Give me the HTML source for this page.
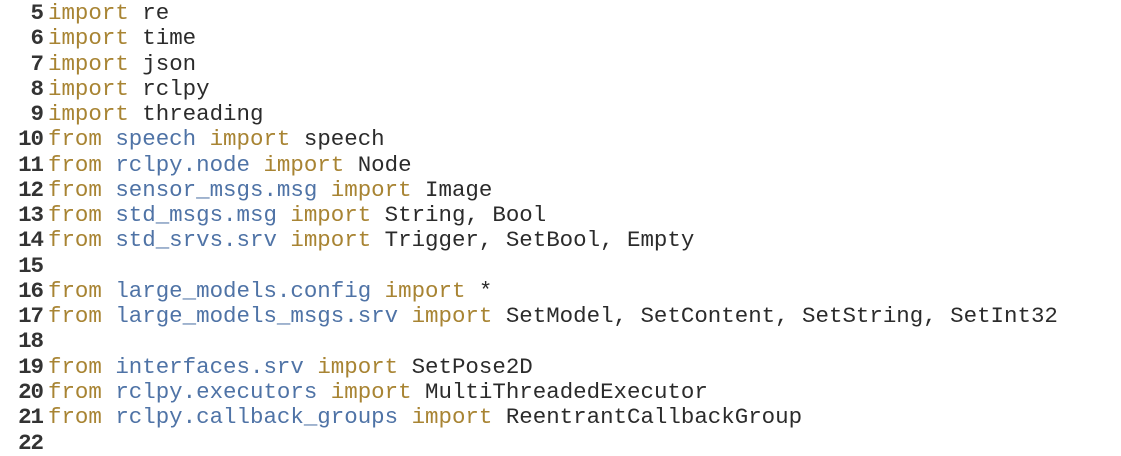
<!DOCTYPE html>
<html><head><meta charset="utf-8"><style>
html,body{margin:0;padding:0;background:#fff;width:1121px;height:440px;overflow:hidden}
pre{margin:0;position:absolute;left:0;top:1px;font-family:"Liberation Mono","DejaVu Sans Mono",monospace;font-size:22.45px;line-height:25.27px;color:#2b2b2b}
.n{display:inline-block;width:43px;text-align:right;margin-right:5px;color:#333;font-weight:bold;letter-spacing:-1px}
.k{color:#a88433}.m{color:#4f73a6}
</style></head><body><pre>
<span class="n">5</span><span class="k">import</span> re
<span class="n">6</span><span class="k">import</span> time
<span class="n">7</span><span class="k">import</span> json
<span class="n">8</span><span class="k">import</span> rclpy
<span class="n">9</span><span class="k">import</span> threading
<span class="n">10</span><span class="k">from</span> <span class="m">speech</span> <span class="k">import</span> speech
<span class="n">11</span><span class="k">from</span> <span class="m">rclpy.node</span> <span class="k">import</span> Node
<span class="n">12</span><span class="k">from</span> <span class="m">sensor_msgs.msg</span> <span class="k">import</span> Image
<span class="n">13</span><span class="k">from</span> <span class="m">std_msgs.msg</span> <span class="k">import</span> String, Bool
<span class="n">14</span><span class="k">from</span> <span class="m">std_srvs.srv</span> <span class="k">import</span> Trigger, SetBool, Empty
<span class="n">15</span>
<span class="n">16</span><span class="k">from</span> <span class="m">large_models.config</span> <span class="k">import</span> *
<span class="n">17</span><span class="k">from</span> <span class="m">large_models_msgs.srv</span> <span class="k">import</span> SetModel, SetContent, SetString, SetInt32
<span class="n">18</span>
<span class="n">19</span><span class="k">from</span> <span class="m">interfaces.srv</span> <span class="k">import</span> SetPose2D
<span class="n">20</span><span class="k">from</span> <span class="m">rclpy.executors</span> <span class="k">import</span> MultiThreadedExecutor
<span class="n">21</span><span class="k">from</span> <span class="m">rclpy.callback_groups</span> <span class="k">import</span> ReentrantCallbackGroup
<span class="n">22</span>
</pre></body></html>
